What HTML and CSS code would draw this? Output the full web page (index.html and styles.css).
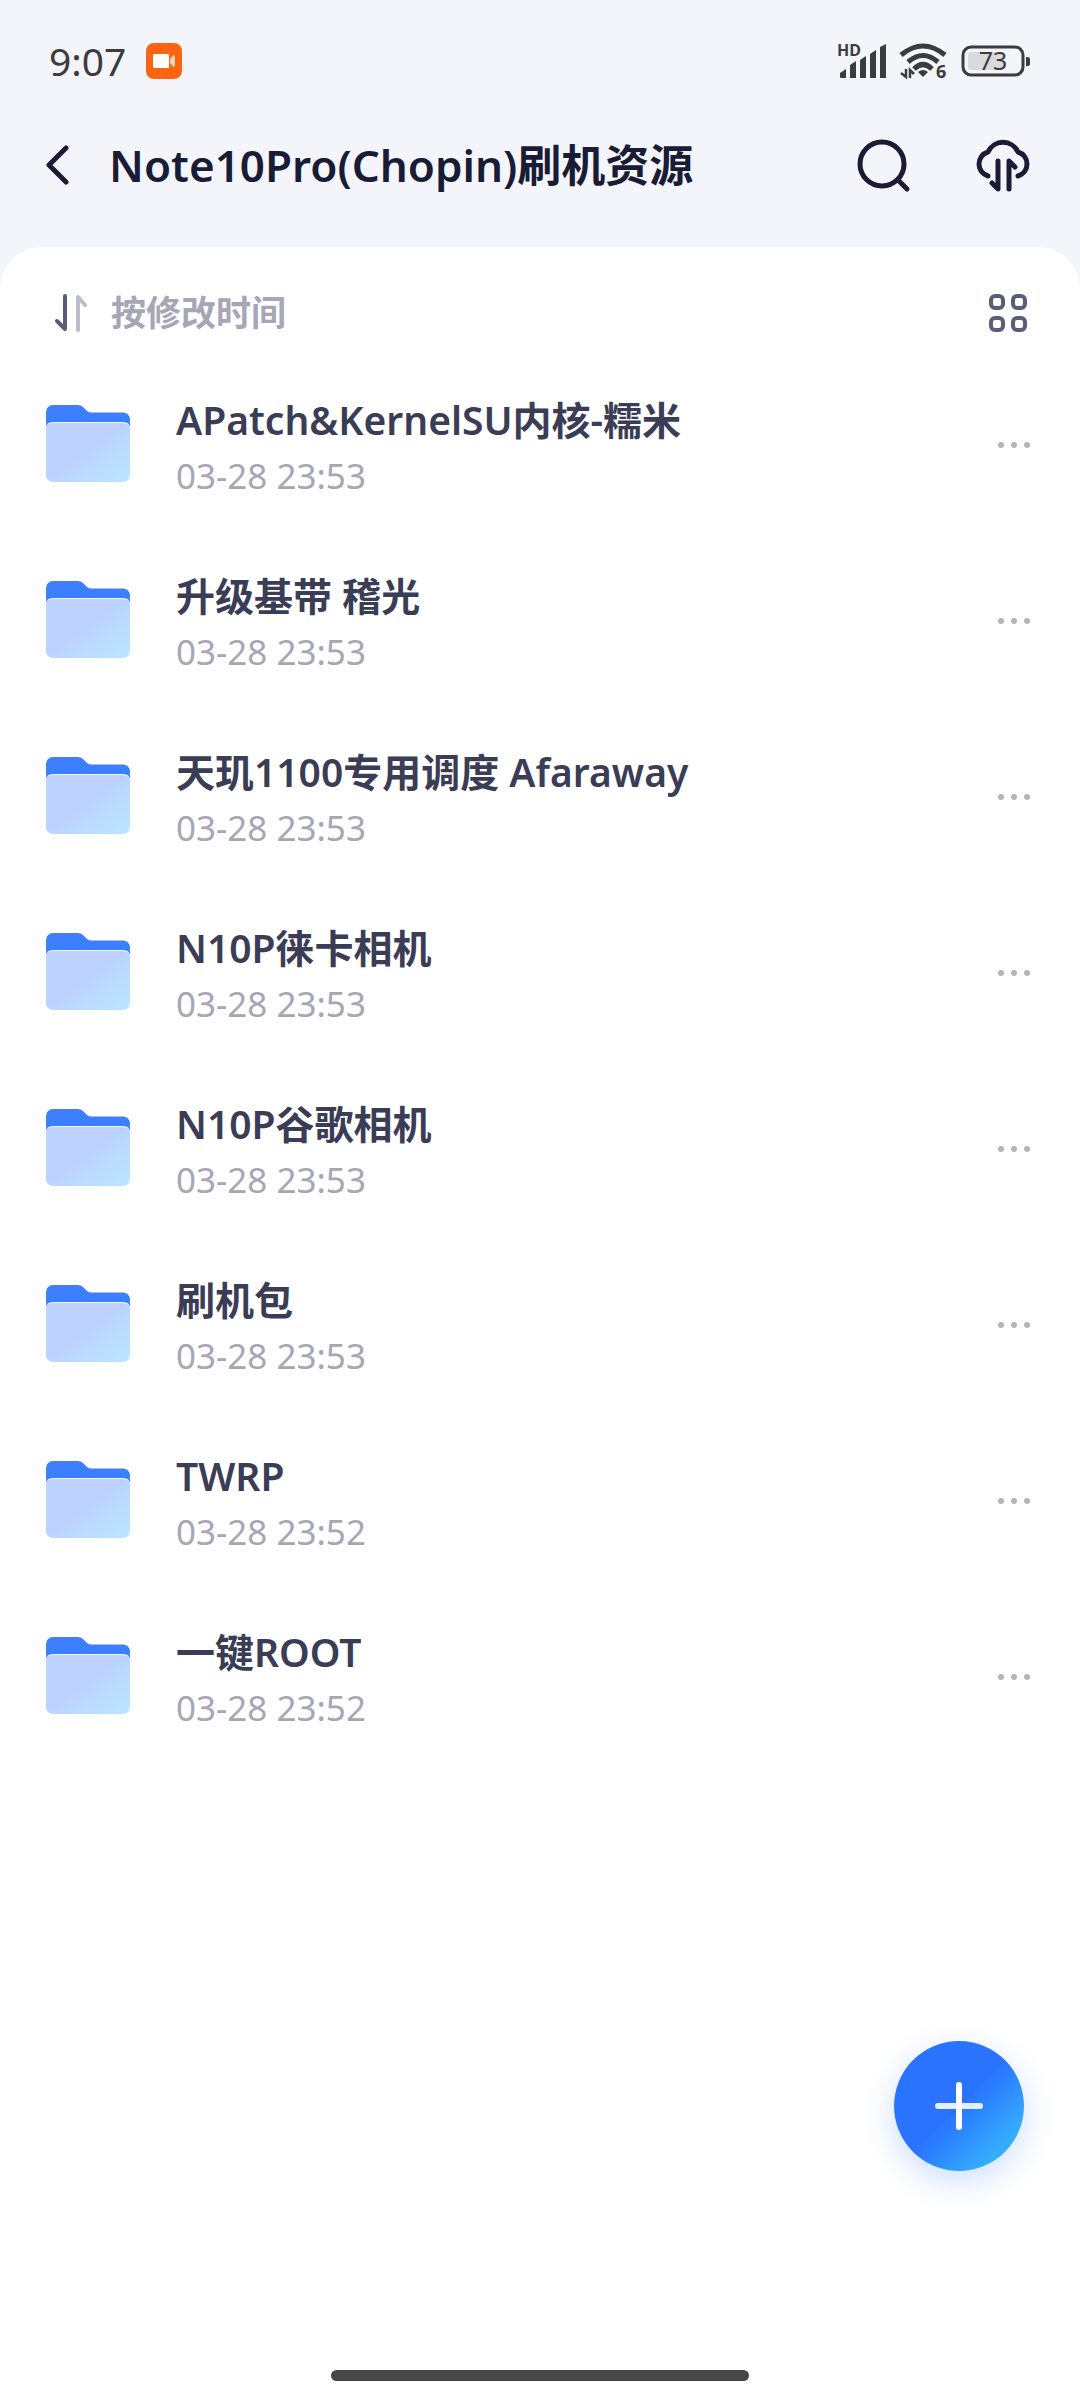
FILE: index.html
```
<!DOCTYPE html>
<html lang="zh-CN">
<head>
    <meta charset="UTF-8">
    <meta name="viewport" content="width=device-width, initial-scale=1.0">
    <title>Note10Pro(Chopin)刷机资源</title>
    <link rel="stylesheet" href="styles.css">
</head>
<body>
    <!-- 渐变和文件夹图标，下面用 use 引用 -->
    <svg class="defs" width="0" height="0" aria-hidden="true">
        <defs>
            <linearGradient id="folder-front" x1="0" y1="0" x2="1" y2="1">
                <stop offset="0.45" stop-color="#bdd2ff"/>
                <stop offset="0.9" stop-color="#b9e3ff"/>
            </linearGradient>
            <symbol id="folder" viewBox="0 0 86 78">
                <path d="M1 30V8a7 7 0 0 1 7-7h25q3 0 5 2l4 4q2 1.500 5 1.500h31a7 7 0 0 1 7 7V30z" fill="#3d7fff"/>
                <path d="M1 24q0-6 7-6h70q7 0 7 6v4H1z" fill="#f0f6ff"/>
                <path d="M1 25q0-6 7-6h70q7 0 7 6v46a7 7 0 0 1-7 7H8a7 7 0 0 1-7-7z" fill="url(#folder-front)"/>
            </symbol>
            <symbol id="dots" viewBox="0 0 34 8">
                <circle cx="4" cy="4" r="3"/>
                <circle cx="17" cy="4" r="3"/>
                <circle cx="30" cy="4" r="3"/>
            </symbol>
        </defs>
    </svg>

    <div class="status-bar">
        <span class="clock">9:07</span>
        <svg class="record" viewBox="0 0 36 36">
            <rect width="36" height="36" rx="8" fill="#fd6412"/>
            <rect x="7" y="11" width="16" height="14" rx="1" fill="#fff"/>
            <path d="M24 16l3-3.500q2-1 2 1v9q0 2-2 1l-3-3.500z" fill="#ffd0b5"/>
        </svg>
        <div class="status-icons">
            <svg class="signal" viewBox="0 0 50 36">
                <text x="0" y="13" class="hd">HD</text>
                <path d="M3 30l6-4v9H4q-1 0-1-1zM13 22l6-4v17h-6zM23 17l6-4v22h-6zM33 11l6-4v28h-6zM43 4l6-3v34h-6z" fill="#3c3c3f"/>
            </svg>
            <svg class="wifi" viewBox="0 0 50 36">
                <g fill="none" stroke="#3c3c3f" stroke-width="5">
                    <path d="M2 12Q24-6 46 12"/>
                    <path d="M9 19Q24 6 39 19"/>
                    <path d="M15 26Q24 17 33 26"/>
                </g>
                <path d="M24 34l-5-5q5-4 10 0z" fill="#3c3c3f"/>
                <path d="M7 26v8l-5-4M11 35v-8l4 4" fill="none" stroke="#3c3c3f" stroke-width="2.500"/>
                <text x="37" y="35" class="gen">6</text>
            </svg>
            <svg class="battery" viewBox="0 0 70 32">
                <rect x="2" y="2" width="60" height="28" rx="8" fill="none" stroke="#3c3c3f" stroke-width="3"/>
                <rect x="7" y="7" width="36" height="18" rx="3" fill="#d9dadd"/>
                <path d="M65 12h1q3 0 3 2v5q0 2-3 2h-1z" fill="#3c3c3f"/>
                <text x="32" y="25" text-anchor="middle" class="level">73</text>
            </svg>
        </div>
    </div>

    <header class="header">
        <button class="icon-btn back" aria-label="返回">
            <svg width="24" height="42" viewBox="0 0 24 42"><path d="M21 4L4 21l17 17"/></svg>
        </button>
        <h1 class="title">Note10Pro(Chopin)刷机资源</h1>
        <button class="icon-btn" aria-label="搜索">
            <svg width="54" height="56" viewBox="0 0 54 56"><circle cx="25" cy="27" r="22"/><path d="M42 44l8 8"/></svg>
        </button>
        <button class="icon-btn transfer" aria-label="传输列表">
            <svg width="56" height="56" viewBox="0 0 56 56">
                <path d="M13 39A12.500 12.500 0 0 1 13 15A16.500 16.500 0 0 1 43 15A12.500 12.500 0 0 1 43 39"/>
                <path d="M23 24v28l-6-6M34 52V24l6 6"/>
            </svg>
        </button>
    </header>

    <main class="panel">
        <div class="sort-bar">
            <button class="sort-btn">
                <svg width="36" height="40" viewBox="0 0 36 40">
                    <path d="M13 3v33l-8-8" stroke="#5a5d78"/>
                    <path d="M26 37V4l7 8" stroke="#bdbdc9"/>
                </svg>
                按修改时间
            </button>
            <button class="icon-btn grid-btn" aria-label="切换视图">
                <svg width="40" height="40" viewBox="0 0 40 40">
                    <rect x="3" y="3" width="12" height="12" rx="4"/>
                    <rect x="25" y="3" width="12" height="12" rx="4"/>
                    <rect x="3" y="25" width="12" height="12" rx="4"/>
                    <rect x="25" y="25" width="12" height="12" rx="4"/>
                </svg>
            </button>
        </div>

        <ul class="file-list">
            <li class="file">
                <svg class="folder"><use href="#folder"/></svg>
                <div class="meta">
                    <div class="name">APatch&amp;KernelSU内核-糯米</div>
                    <div class="date">03-28 23:53</div>
                </div>
                <button class="more" aria-label="更多"><svg><use href="#dots"/></svg></button>
            </li>
            <li class="file">
                <svg class="folder"><use href="#folder"/></svg>
                <div class="meta">
                    <div class="name">升级基带 稽光</div>
                    <div class="date">03-28 23:53</div>
                </div>
                <button class="more" aria-label="更多"><svg><use href="#dots"/></svg></button>
            </li>
            <li class="file">
                <svg class="folder"><use href="#folder"/></svg>
                <div class="meta">
                    <div class="name">天玑1100专用调度 Afaraway</div>
                    <div class="date">03-28 23:53</div>
                </div>
                <button class="more" aria-label="更多"><svg><use href="#dots"/></svg></button>
            </li>
            <li class="file">
                <svg class="folder"><use href="#folder"/></svg>
                <div class="meta">
                    <div class="name">N10P徕卡相机</div>
                    <div class="date">03-28 23:53</div>
                </div>
                <button class="more" aria-label="更多"><svg><use href="#dots"/></svg></button>
            </li>
            <li class="file">
                <svg class="folder"><use href="#folder"/></svg>
                <div class="meta">
                    <div class="name">N10P谷歌相机</div>
                    <div class="date">03-28 23:53</div>
                </div>
                <button class="more" aria-label="更多"><svg><use href="#dots"/></svg></button>
            </li>
            <li class="file">
                <svg class="folder"><use href="#folder"/></svg>
                <div class="meta">
                    <div class="name">刷机包</div>
                    <div class="date">03-28 23:53</div>
                </div>
                <button class="more" aria-label="更多"><svg><use href="#dots"/></svg></button>
            </li>
            <li class="file">
                <svg class="folder"><use href="#folder"/></svg>
                <div class="meta">
                    <div class="name">TWRP</div>
                    <div class="date">03-28 23:52</div>
                </div>
                <button class="more" aria-label="更多"><svg><use href="#dots"/></svg></button>
            </li>
            <li class="file">
                <svg class="folder"><use href="#folder"/></svg>
                <div class="meta">
                    <div class="name">一键ROOT</div>
                    <div class="date">03-28 23:52</div>
                </div>
                <button class="more" aria-label="更多"><svg><use href="#dots"/></svg></button>
            </li>
        </ul>
    </main>

    <button class="add-btn" aria-label="新建">
        <svg width="48" height="48" viewBox="0 0 48 48">
            <path d="M3 24h42" stroke="#e3efff"/>
            <path d="M24 3v42" stroke="#fff"/>
        </svg>
    </button>
    <div class="home-bar"></div>
</body>
</html>
```
FILE: styles.css
```
* {
    box-sizing: border-box;
}
body {
    font-family: "Noto Sans", "Noto Sans CJK SC", sans-serif;
    display: flex;
    flex-direction: column;
    min-height: 100vh;
    margin: 0;
    background-color: #f4f5fb;
    color: #191c34;
}
button {
    font-family: inherit;
    border: 0;
    padding: 0;
    background: none;
    cursor: pointer;
}
svg {
    display: block;
}
.defs {
    position: absolute;
}

/* 状态栏 */
.status-bar {
    display: flex;
    align-items: center;
    height: 122px;
    padding: 0 49px;
    color: #3c3c3f;
}
.clock {
    font-size: 39px;
    line-height: 48px;
}
.record {
    width: 36px;
    height: 36px;
    margin-left: 20px;
}
.status-icons {
    display: flex;
    align-items: center;
    gap: 12px;
    margin-left: auto;
}
.status-icons svg {
    overflow: visible;
}
.signal,
.wifi {
    width: 50px;
    height: 36px;
}
.battery {
    width: 70px;
    height: 32px;
}
.status-icons text {
    fill: #3c3c3f;
}
.hd {
    font-size: 16px;
    font-weight: 700;
}
.gen {
    font-size: 18px;
    font-weight: 700;
}
.level {
    font-size: 25px;
}

/* 标题栏 */
.header {
    display: flex;
    align-items: center;
    height: 86px;
    margin-bottom: 39px;
    padding: 0 49px 0 45px;
}
.icon-btn svg {
    fill: none;
    stroke: #191c34;
    stroke-width: 5;
    stroke-linecap: round;
    stroke-linejoin: round;
}
.title {
    flex: 1;
    margin: 0 0 0 40px;
    font-size: 44px;
    font-weight: 600;
    line-height: 60px;
}
.transfer {
    margin-left: 64px;
}

/* 文件列表 */
.panel {
    flex: 1;
    background-color: #fff;
    border-radius: 42px 42px 0 0;
}
.sort-bar {
    display: flex;
    align-items: center;
    justify-content: space-between;
    height: 108px;
    padding: 24px 52px 0;
}
.sort-btn {
    display: flex;
    align-items: center;
    gap: 23px;
    color: #a6a6b5;
    font-size: 35px;
    font-weight: 600;
    line-height: 48px;
}
.sort-btn svg {
    fill: none;
    stroke-width: 4;
    stroke-linecap: round;
    stroke-linejoin: round;
}
.grid-btn svg {
    stroke: #5a5d78;
    stroke-width: 4;
}
.file-list {
    list-style: none;
    margin: 0;
    padding: 0;
}
.file {
    display: flex;
    align-items: center;
    height: 176px;
    padding: 0 49px 0 45px;
}
.folder {
    width: 86px;
    height: 78px;
}
.meta {
    flex: 1;
    margin-left: 45px;
    padding-top: 10px;
}
.name {
    color: #3a3d55;
    font-size: 39px;
    font-weight: 600;
    line-height: 56px;
}
.date {
    color: #a6a6b5;
    font-size: 35px;
    line-height: 56px;
}
.more {
    padding: 20px 0 16px;
}
.more svg {
    width: 34px;
    height: 8px;
    fill: #b4b4bd;
}

/* 悬浮按钮 */
.add-btn {
    position: fixed;
    right: 56px;
    bottom: 229px;
    display: flex;
    align-items: center;
    justify-content: center;
    width: 130px;
    height: 130px;
    border-radius: 50%;
    background: linear-gradient(135deg, #2a73ff 50%, #33adff 82%);
    box-shadow: 0 10px 32px rgba(42, 115, 255, 0.24);
}
.add-btn svg {
    stroke-width: 6;
    stroke-linecap: round;
}
.home-bar {
    position: fixed;
    left: 50%;
    bottom: 19px;
    width: 418px;
    height: 11px;
    margin-left: -209px;
    border-radius: 6px;
    background-color: #474747;
}
```
